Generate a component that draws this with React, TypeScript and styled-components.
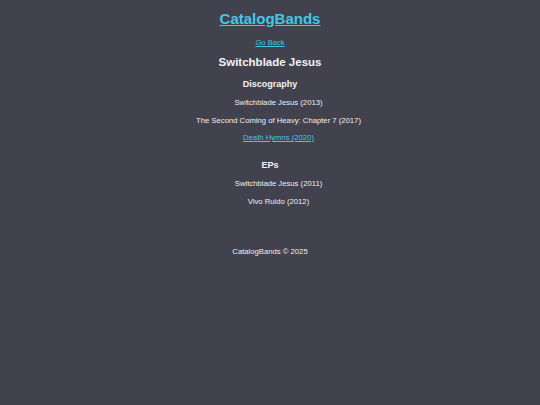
import * as React from 'react';
import styled, { createGlobalStyle } from 'styled-components';

const GlobalStyle = createGlobalStyle`
    html, body {
        margin: 0;
        padding: 0;
        background: #42424f;
    }
    body {
        font-family: 'Liberation Sans', Arial, sans-serif;
        color: #eeeeee;
        font-size: 7.5px;
    }
`;

const Page = styled.div`
    min-height: 405px;
    text-align: center;
    padding-top: 10px;
`;

const Title = styled.h1`
    margin: 0;
    font-size: 15px;
    line-height: 17px;
    font-weight: bold;

    a {
        color: #40c8e6;
    }
`;

const BackLink = styled.a`
    display: inline-block;
    margin-top: 11px;
    color: #40c8e6;
    font-size: 7.6px;
    line-height: 9px;
`;

const BandName = styled.h2`
    margin: 9px 0 0;
    font-size: 11.5px;
    line-height: 13px;
    font-weight: bold;
    color: #f4f4f4;
`;

const SectionTitle = styled.h3<{ $spaced?: boolean }>`
    margin: ${(p) => (p.$spaced ? '18px' : '10px')} 0 0;
    font-size: 9px;
    line-height: 10px;
    font-weight: bold;
    color: #f4f4f4;
`;

const List = styled.ul`
    margin: 0;
    padding: 0 0 0 17px;
    list-style: none;
`;

const Item = styled.li`
    margin-top: 9px;
    font-size: 7.7px;
    line-height: 9px;

    & + & {
        margin-top: 8.5px;
    }

    a {
        color: #40c8e6;
    }
`;

const Footer = styled.footer`
    margin-top: 41px;
    font-size: 7.7px;
    line-height: 9px;
`;

type Release = { title: string; year: number; link?: boolean };

const albums: Release[] = [
    { title: 'Switchblade Jesus', year: 2013 },
    { title: 'The Second Coming of Heavy: Chapter 7', year: 2017 },
    { title: 'Death Hymns', year: 2020, link: true },
];

const eps: Release[] = [
    { title: 'Switchblade Jesus', year: 2011 },
    { title: 'Vivo Ruido', year: 2012 },
];

const ReleaseList: React.FC<{ items: Release[] }> = ({ items }) => (
    <List>
        {items.map((r, i) => {
            const label = `${r.title} (${r.year})`;
            return (
                <Item key={i}>
                    {r.link ? <a href="#">{label}</a> : label}
                </Item>
            );
        })}
    </List>
);

export default function App() {
    return (
        <>
            <GlobalStyle />
            <Page>
                <Title>
                    <a href="#">CatalogBands</a>
                </Title>
                <BackLink href="#">Go Back</BackLink>
                <BandName>Switchblade Jesus</BandName>
                <SectionTitle>Discography</SectionTitle>
                <ReleaseList items={albums} />
                <SectionTitle $spaced>EPs</SectionTitle>
                <ReleaseList items={eps} />
                <Footer>CatalogBands © 2025</Footer>
            </Page>
        </>
    );
}
